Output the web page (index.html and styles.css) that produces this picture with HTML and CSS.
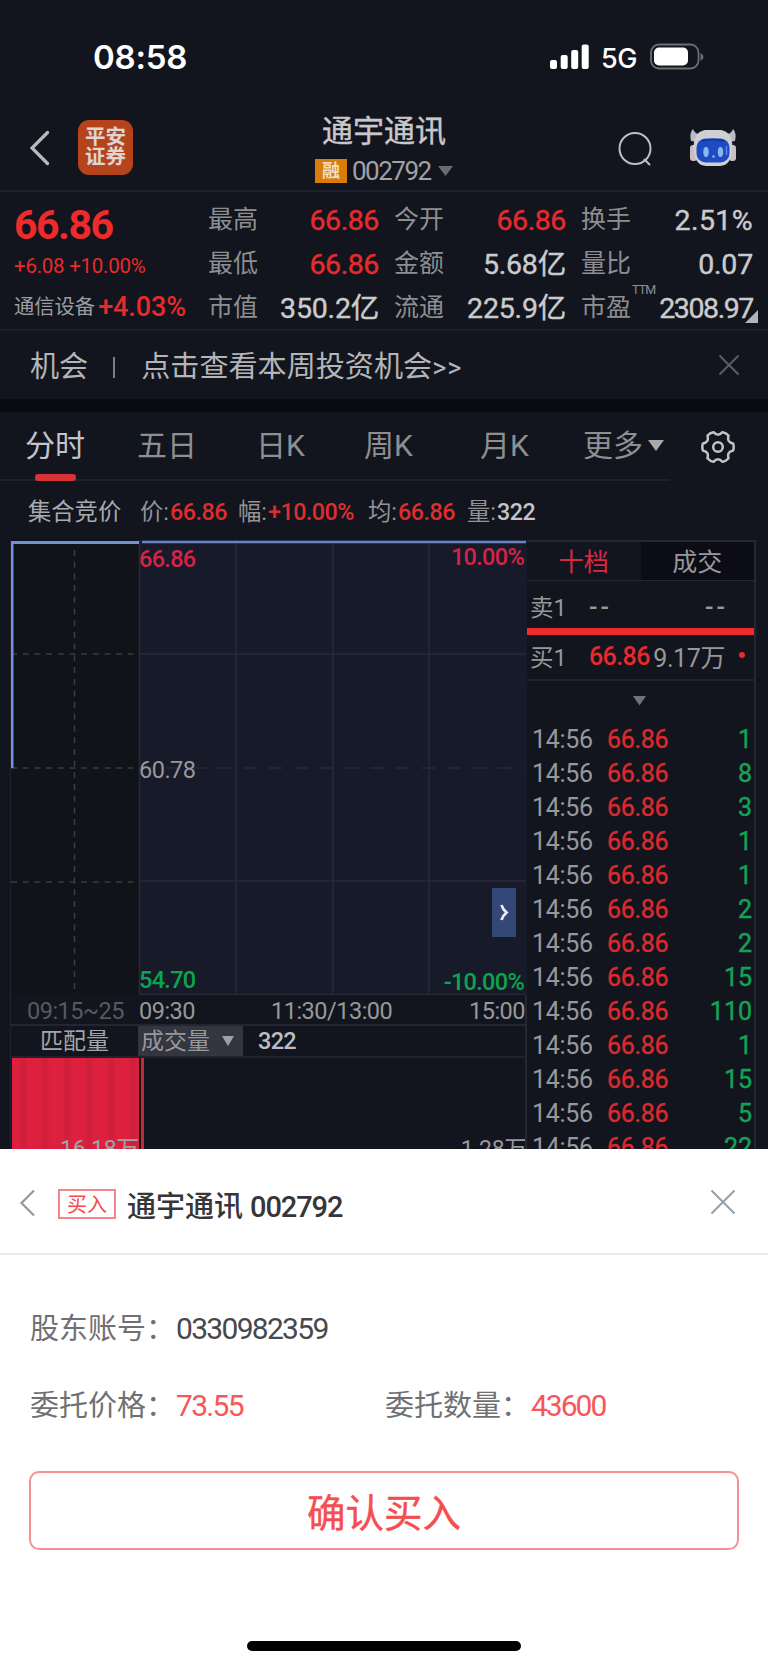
FILE: index.html
```html
<!DOCTYPE html>
<html lang="zh-CN">
<head>
<meta charset="utf-8">
<title>通宇通讯 002792</title>
<link rel="stylesheet" href="styles.css">
</head>
<body>
<div class="screen">
  <header class="status">
    <span class="clock">08:58</span>
    <svg class="signal" width="40" height="26" viewBox="0 0 40 26" fill="#fff"><rect x="0" y="16" width="7" height="9" rx="2"/><rect x="10.7" y="11" width="7" height="14" rx="2"/><rect x="21.2" y="6" width="7" height="19" rx="2"/><rect x="31.7" y="0.5" width="7" height="24.5" rx="2"/></svg>
    <span class="net">5G</span>
    <svg class="battery" width="56" height="28" viewBox="0 0 56 28"><rect x="1" y="1.5" width="47.5" height="24" rx="8" fill="none" stroke="#6d6e74" stroke-width="1.8"/><rect x="4" y="4.5" width="34" height="18" rx="5" fill="#fff"/><path d="M50.5 10v8q3-1.500 3-4t-3-4z" fill="#6d6e74"/></svg>
  </header>

  <nav class="topbar">
    <svg class="back" width="20" height="36" viewBox="0 0 20 36"><path d="M17.500 2.500L2 18l15.500 15.500" fill="none" stroke="#b9b9bc" stroke-width="3.200" stroke-linecap="round"/></svg>
    <div class="logo"><span>平安</span><span>证券</span></div>
    <div class="stock">
      <div class="stock-name">通宇通讯</div>
      <div class="stock-code"><span class="tag">融</span><span class="code">002792</span><svg width="16" height="11" viewBox="0 0 16 11"><path d="M0 0h15L7.500 10z" fill="#6b6b6e"/></svg></div>
    </div>
    <svg class="search" width="36" height="36" viewBox="0 0 36 36" fill="none" stroke="#bfbfc2" stroke-width="2" stroke-linecap="round"><circle cx="17" cy="17.500" r="15.500"/><path d="M26.500 28.500l5 5"/></svg>
    <svg class="robot" width="48" height="40" viewBox="0 0 48 40">
      <path d="M2 13Q0 5 4 1Q5.500 5 9 6L8 14zM46 13Q48 5 44 1Q42.500 5 39 6L40 14z" fill="#b9bcc6"/>
      <rect x="1" y="17" width="7" height="16" rx="3" fill="#c9bfc2"/><rect x="40" y="17" width="7" height="16" rx="3" fill="#c9bfc2"/>
      <path d="M16 2h16Q43 4 43.500 19Q43 37.500 31 38H17Q5 37.500 4.500 19Q5 4 16 2z" fill="#d0d0d4"/>
      <rect x="7.500" y="10.500" width="33" height="24" rx="9" fill="#1c4bc4"/>
      <path d="M13 13q11-3 22 0" stroke="#1237a0" stroke-width="2" fill="none"/>
      <ellipse cx="17" cy="24" rx="2.700" ry="5" fill="#8cb6ee"/><ellipse cx="31.500" cy="24" rx="2.700" ry="5" fill="#8cb6ee"/>
      <path d="M37.500 18v9" stroke="#5c86e6" stroke-width="1.500"/><circle cx="24.500" cy="28.500" r="1.300" fill="#8cb6ee"/>
    </svg>
  </nav>

  <section class="quote">
    <div class="quote-main">
      <div class="price">66.86</div>
      <div class="change">+6.08 +10.00%</div>
      <div class="sector">通信设备<b>+4.03%</b></div>
    </div>
    <dl class="stats">
      <dt>最高</dt><dd class="up">66.86</dd><dt>今开</dt><dd class="up">66.86</dd><dt>换手</dt><dd class="wide">2.51%</dd>
      <dt>最低</dt><dd class="up">66.86</dd><dt>金额</dt><dd>5.68亿</dd><dt>量比</dt><dd>0.07</dd>
      <dt>市值</dt><dd>350.2亿</dd><dt>流通</dt><dd>225.9亿</dd><dt>市盈<sup>TTM</sup></dt><dd class="tight">2308.97</dd>
    </dl>
    <i class="corner"></i>
  </section>

  <section class="notice">
    <span>机会</span><i></i><span class="notice-text">点击查看本周投资机会<em>&gt;&gt;</em></span>
    <svg width="22" height="22" viewBox="0 0 22 22"><path d="M1.500 1.500l19 19M20.500 1.500l-19 19" stroke="#5a5d69" stroke-width="2"/></svg>
  </section>

  <section class="periods">
    <div class="tabs">
      <span class="active">分时</span><span>五日</span><span>日K</span><span>周K</span><span>月K</span><span class="more">更多<svg width="16" height="12" viewBox="0 0 16 12"><path d="M0 0h16L8 11z" fill="#a9a9ac"/></svg></span>
    </div>
    <svg class="gear" width="34" height="34" viewBox="-17 -17 34 34" fill="none" stroke="#c3c3c5" stroke-width="2.500" stroke-linejoin="round"><path d="M15.100-3.500Q16.300 0 15.100 3.500Q8.500 4.900 10.600 11.300Q8.200 14.100 4.500 14.800Q0 9.800-4.500 14.800Q-8.200 14.100-10.600 11.300Q-8.500 4.900-15.100 3.500Q-16.300 0-15.100-3.500Q-8.500-4.900-10.600-11.300Q-8.200-14.100-4.500-14.800Q0-9.800 4.500-14.800Q8.200-14.100 10.600-11.300Q8.500-4.900 15.100-3.500z"/><circle r="4.800"/></svg>
  </section>

  <section class="summary">
    <span class="auction">集合竞价</span>
    <span class="s1">价:<b>66.86</b></span><span class="s2">幅:<b>+10.00%</b></span><span class="s3">均:<b>66.86</b></span><span class="s4">量:<b class="vol">322</b></span>
  </section>

  <main class="market">
    <div class="chart">
      <div class="plot">
        <svg width="517" height="455" viewBox="0 0 517 455">
          <rect x="0" y="0" width="128" height="455" fill="#101317"/>
          <rect x="128" y="0" width="388" height="455" fill="#171a28"/>
          <g stroke="#282a38" stroke-width="1.500" fill="none">
            <path d="M128.500 0v455M225 0v455M322 0v455M418 0v455M129 114h386M129 341h386M129 454.500h386"/>
            <path d="M129 228h386" stroke-dasharray="14 11.500" stroke-dashoffset="-1"/>
          </g>
          <g stroke="#3a3d41" stroke-width="1.500" stroke-dasharray="6 5.700" fill="none"><path d="M63.500 10v445M0 114h122M0 228h122M0 342h122"/></g>
          <path d="M1 228V2.500h127" fill="none" stroke="#7390dc" stroke-width="3"/>
          <path d="M131 2h384" stroke="#6c82c6" stroke-width="2.500"/>
        </svg>
        <span class="lbl top-left">66.86</span><span class="lbl top-right">10.00%</span>
        <span class="lbl middle">60.78</span>
        <span class="lbl low-left">54.70</span><span class="lbl low-right">-10.00%</span>
        <span class="expand"><svg width="9" height="17" viewBox="0 0 9 17"><path d="M1.500 1q1 4 5 7.500q-4 3.500-5 7.500" fill="none" stroke="#e8ebf5" stroke-width="2.800"/></svg></span>
      </div>
      <div class="times"><span class="pre">09:15~25</span><span class="t1">09:30</span><span class="t2">11:30/13:00</span><span class="t3">15:00</span></div>
      <div class="volhead"><span class="match">匹配量</span><span class="select">成交量<svg width="12" height="11" viewBox="0 0 12 11"><path d="M0 0h12L6 10z" fill="#a0a0a4"/></svg></span><span class="volnum">322</span></div>
      <div class="volume"><div class="block">16.18万</div><i class="bar"></i><div class="rest">1.28万</div></div>
    </div>

    <aside class="book">
      <div class="book-tabs"><span class="on">十档</span><span>成交</span></div>
      <div class="level sell"><span>卖1</span><span class="dash">--</span><span class="qty dash">--</span></div>
      <div class="level buy"><span>买1</span><span class="up">66.86</span><span class="qty">9.17万</span><i></i></div>
      <div class="fold"><svg width="13" height="10" viewBox="0 0 13 10"><path d="M0 0h13L6.500 9.500z" fill="#727276"/></svg></div>
      <ul class="ticks">
        <li><span>14:56</span><b>66.86</b><em>1</em></li>
        <li><span>14:56</span><b>66.86</b><em>8</em></li>
        <li><span>14:56</span><b>66.86</b><em>3</em></li>
        <li><span>14:56</span><b>66.86</b><em>1</em></li>
        <li><span>14:56</span><b>66.86</b><em>1</em></li>
        <li><span>14:56</span><b>66.86</b><em>2</em></li>
        <li><span>14:56</span><b>66.86</b><em>2</em></li>
        <li><span>14:56</span><b>66.86</b><em>15</em></li>
        <li><span>14:56</span><b>66.86</b><em>110</em></li>
        <li><span>14:56</span><b>66.86</b><em>1</em></li>
        <li><span>14:56</span><b>66.86</b><em>15</em></li>
        <li><span>14:56</span><b>66.86</b><em>5</em></li>
        <li><span>14:56</span><b>66.86</b><em>22</em></li>
      </ul>
    </aside>
  </main>

  <section class="sheet">
    <header class="sheet-head">
      <svg class="sheet-back" width="17" height="28" viewBox="0 0 17 28"><path d="M15 1.500L2.500 14 15 26.500" fill="none" stroke="#97989b" stroke-width="2.200"/></svg>
      <span class="side">买入</span>
      <h1>通宇通讯<span>002792</span></h1>
      <svg class="sheet-close" width="26" height="26" viewBox="0 0 26 26"><path d="M1.500 1.500l23 23M24.500 1.500l-23 23" stroke="#95a0a8" stroke-width="2"/></svg>
    </header>
    <div class="field"><label>股东账号：</label><span>0330982359</span></div>
    <div class="field second"><label>委托价格：</label><span class="red">73.55</span><label class="amount">委托数量：</label><span class="red">43600</span></div>
    <button class="confirm">确认买入</button>
    <div class="home"></div>
  </section>
</div>
</body>
</html>
```
FILE: styles.css
```css
* { box-sizing: border-box; }
body { margin: 0; background: #12151e; font-family: Roboto, "Noto Sans CJK SC", sans-serif; color: #9c9c9e; }
i, em { font-style: normal; }
svg { display: block; flex: none; }
.screen { width: 768px; height: 1667px; overflow: hidden; background: #12151e; display: flex; flex-direction: column; white-space: nowrap; }
.screen > * { flex: none; }
.up { color: #e82a2c; }

.status { height: 114px; display: flex; align-items: center; color: #fff; padding-left: 93px; font-family: Inter, sans-serif; }
.clock { font-size: 33px; font-weight: 600; width: 457px; letter-spacing: -0.2px; line-height: 40px; }
.net { font-size: 27px; font-weight: 500; width: 49px; margin-left: 11px; letter-spacing: -0.5px; padding-top: 2px; }

.topbar { height: 78px; display: flex; align-items: flex-start; border-bottom: 2px solid #1c1f2b; }
.back { margin: 16px 0 0 30px; }
.logo { width: 55px; height: 55px; margin: 6px 0 0 28px; border-radius: 11px; background: #b5441c; color: #ded5d2; font-size: 20.500px; font-weight: 700; display: flex; flex-direction: column; align-items: center; padding-top: 8px; }
.logo span { height: 19.500px; line-height: 19.500px; }
.stock { width: 300px; flex: none; margin-left: 182px; }
.stock-name { font-size: 31px; line-height: 36px; font-weight: 400; color: #c8c8ca; padding-left: 7px; -webkit-text-stroke: 0.400px #c8c8ca; }
.stock-code { display: flex; align-items: center; height: 26px; margin-top: 8px; }
.tag { width: 32px; height: 24px; background: #d97c0c; color: #f2dfc4; font-size: 18px; font-weight: 700; line-height: 24px; text-align: center; }
.code { font-size: 26px; letter-spacing: -1.500px; width: 91px; padding-left: 5px; color: #a2a2a4; }
.search { margin: 17px 0 0 3px; }
.robot { margin: 14px 0 0 35px; }

.quote { height: 139px; border-bottom: 2px solid #1c1f2b; display: flex; position: relative; }
.quote-main { width: 208px; padding: 9px 0 0 14px; color: #e82a2c; }
.price { font-size: 41px; font-weight: 700; line-height: 48px; height: 48px; letter-spacing: -1.500px; color: #ee2a2b; }
.change { font-size: 20.500px; line-height: 26px; margin-top: 4px; letter-spacing: -0.250px; }
.sector { font-size: 20.300px; line-height: 30px; margin-top: 13px; color: #9c9c9e; display: flex; align-items: center; }
.sector b { font-size: 27px; font-weight: 500; color: #e82a2c; margin-left: 3px; letter-spacing: -0.100px; }
.stats { margin: 6px 0 0; width: 546px; display: grid; grid-template-columns: 50px 121px 65px 122px 65px 122px; grid-auto-rows: 44px; align-items: center; }
.stats dt { font-size: 25px; color: #8e8e91; position: relative; text-align: right; line-height: 44px; }
.stats dd { margin: 0; font-size: 28.500px; text-align: right; color: #cbcbcd; line-height: 43px; letter-spacing: -0.200px; -webkit-text-stroke: 0.400px currentColor; }
.stats dd.up { color: #e82a2c; letter-spacing: -0.400px; }
.stats .tight { letter-spacing: -1.400px; }
.stats .wide { letter-spacing: 0.400px; }
.stats sup { position: absolute; left: 66px; top: -3px; font-size: 12.500px; line-height: 14px; letter-spacing: -0.900px; }
.corner { position: absolute; left: 745px; top: 118px; width: 13px; height: 13px; background: #b4b4b6; clip-path: polygon(100% 0, 100% 100%, 0 100%); }

.notice { height: 68px; display: flex; align-items: center; font-size: 29.100px; color: #b4b5b9; padding-left: 30px; }
.notice span { padding-bottom: 3px; }
.notice i { width: 2px; height: 21px; background: #7d7e83; margin: 5px 26px 0 25px; }
.notice-text { width: 577px; }
.notice em { font-size: 27px; letter-spacing: 1px; }

.periods { height: 83px; border-top: 13px solid #0a0a13; display: flex; background: linear-gradient(#1f222e, #1f222e) 0 67px / 670px 2px no-repeat; }
.tabs { width: 702px; height: 69px; display: grid; grid-template-columns: 112px 119px 108px 116px 103px 145px; padding-left: 25px; font-size: 30px; line-height: 68px; color: #8f8f92; }
.active { color: #c3c4c9; position: relative; }
.active::after { content: ""; position: absolute; left: 10px; bottom: 0; width: 41px; height: 7px; border-radius: 3px; background: #d63333; }
.more { display: flex; align-items: center; gap: 5px; height: 68px; }
.gear { margin-top: 18px; margin-left: -1px; }

.summary { height: 58px; display: flex; align-items: center; padding: 0 0 2px 28px; font-size: 23.300px; color: #939396; }
.summary b { font-weight: 500; color: #df2d2e; letter-spacing: -0.500px; margin-left: 1px; }
.auction { width: 112px; color: #a9aaae; }
.s1 { width: 98px; } .s2 { width: 130px; } .s3 { width: 99px; }
.summary .vol { color: #c4c4c9; }

.market { height: 609px; display: flex; overflow: hidden; padding-left: 10px; }
.chart { width: 517px; border-left: 1px solid #20232f; }
.plot { height: 455px; position: relative; overflow: hidden; }
.lbl { position: absolute; font-size: 23.500px; line-height: 26px; font-weight: 500; letter-spacing: -0.700px; }
.top-left { left: 128px; top: 6px; color: #d42448; }
.top-right { right: 3px; top: 4px; color: #d42448; }
.middle { left: 128px; top: 217px; color: #98989b; font-weight: 400; letter-spacing: -0.500px; }
.low-left { left: 128px; top: 427px; color: #0aa64d; }
.low-right { right: 3px; top: 429px; color: #0aa64d; }
.expand { position: absolute; left: 481px; top: 348px; width: 24px; height: 49px; background: #344878; display: flex; align-items: center; justify-content: center; }
.times { height: 31px; display: flex; font-size: 23.500px; line-height: 32px; letter-spacing: -0.500px; color: #98989b; border-bottom: 2px solid #232632; }
.pre { width: 128px; padding-left: 16px; color: #58595f; }
.t1 { width: 132px; } .t2 { width: 190px; } .t3 { flex: 1; text-align: right; padding-right: 2px; }
.volhead { height: 32px; display: flex; line-height: 31px; font-size: 23px; border-bottom: 2px solid #20232f; }
.match { width: 127px; padding-left: 29px; color: #a6a6aa; }
.select { width: 105px; height: 30px; background: #33353f; display: flex; align-items: center; padding-left: 3px; gap: 12px; color: #98989b; }
.volnum { padding-left: 15px; font-size: 23.500px; font-weight: 500; letter-spacing: -0.700px; color: #bdbdc1; }
.volume { height: 93px; display: flex; padding-left: 1px; }
.block { width: 127px; background: repeating-linear-gradient(90deg, #dd203d 0 7px, #d01f3b 9px 13px, #dc203d 16px 22px); color: #a3a3a7; }
.block, .rest { height: 93px; line-height: 28px; padding-top: 78px; font-size: 23px; text-align: right; overflow: hidden; letter-spacing: -0.300px; }
.bar { width: 3px; margin-left: 2px; background: #c32c2e; }
.rest { flex: 1; color: #98989b; }

.book { width: 231px; border: 2px solid #252834; border-bottom: 0; font-size: 27px; color: #98989b; margin-left: -2px; }
.book-tabs { height: 39px; display: flex; border-bottom: 1px solid #252834; font-size: 25px; line-height: 41px; text-align: center; }
.book-tabs span { flex: 1; background: #0b0c15; }
.book-tabs .on { background: none; color: #d92847; }
.level { display: grid; grid-template-columns: 59px 62px 74px 1fr; padding-left: 3px; align-items: center; font-size: 25px; }
.level span:first-child { font-size: 23.500px; }
.level .qty { text-align: right; }
.level .dash { letter-spacing: 3px; font-size: 25px; font-weight: 500; padding-top: 3px; }
.level .qty.dash { padding-left: 6px; margin-right: -3px; }
.sell { height: 54px; border-bottom: 7px solid #ee2a2a; padding-top: 2px; }
.buy { height: 46px; border-bottom: 2px solid #20232f; padding-bottom: 2px; }
.buy i { width: 6px; height: 6px; border-radius: 50%; background: #ee2a2a; margin: -3px 0 0 14px; }
.level.buy .up { letter-spacing: -0.600px; font-weight: 500; }
.level.buy .qty { letter-spacing: -0.400px; }
.fold { height: 41px; display: flex; justify-content: center; padding: 15px 2px 0 0; }
.ticks { list-style: none; margin: 0; padding: 1px 2px 0 5px; font-size: 25px; line-height: 34px; }
.ticks li { height: 34px; display: grid; grid-template-columns: 75px 70px 1fr; }
.ticks span { letter-spacing: -0.300px; }
.ticks b { font-weight: 400; color: #dc2a2c; letter-spacing: -0.300px; -webkit-text-stroke: 0.400px #dc2a2c; }
.ticks em { text-align: right; color: #12a456; -webkit-text-stroke: 0.400px #12a456; }

.sheet { height: 518px; background: #fff; font-size: 29px; color: #707072; }
.sheet-head { height: 106px; border-bottom: 2px solid #ebebec; display: flex; align-items: flex-start; padding: 39px 0 0 19px; }
.sheet-back { margin-top: 1px; }
.side { margin: 1px 0 0 22px; width: 58px; height: 30px; border: 2px solid #f58588; color: #f24b4e; font-size: 20px; line-height: 28px; text-align: center; }
h1 { width: 583px; margin: 1px 0 0 11px; font-size: 29px; font-weight: 500; line-height: 36px; color: #363638; }
h1 span { margin-left: 7px; letter-spacing: -1.100px; }
.sheet-close { margin-top: 1px; }
.field { height: 40px; margin: 54px 0 0 30px; display: flex; line-height: 40px; }
.field label { width: 146px; }
.field span { font-size: 30px; letter-spacing: -1.700px; color: #48484a; width: 209px; }
.field .red { color: #f85659; }
.field .red:last-child { letter-spacing: -2px; }
.field.second { margin-top: 37px; }
.confirm { display: block; width: 710px; height: 79px; margin: 45px 0 0 29px; background: #fff; border: 2px solid #f78f91; border-radius: 10px; color: #f44e50; font: 400 38.500px/74px "Noto Sans CJK SC", sans-serif; padding: 0 0 2px; -webkit-text-stroke: 0.400px #f44e50; }
.home { width: 274px; height: 10px; margin: 91px 0 0 247px; background: #000; border-radius: 5px; }
```
